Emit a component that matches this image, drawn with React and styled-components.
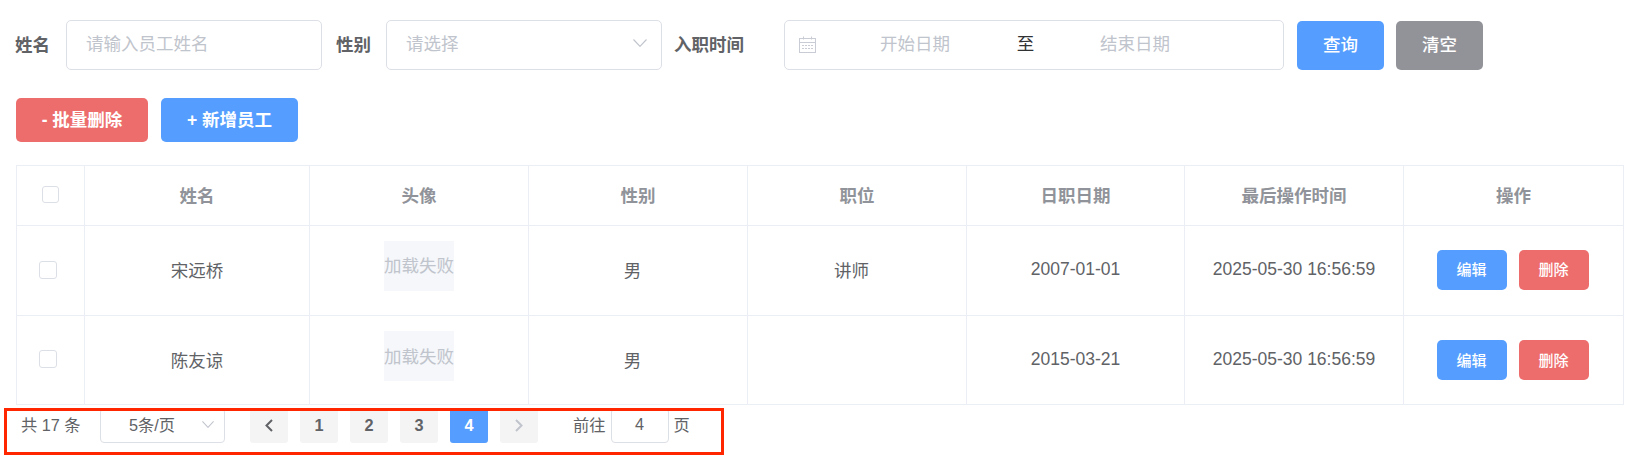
import React from "react";
import styled, { createGlobalStyle } from "styled-components";

const Global = createGlobalStyle`
  * { box-sizing: border-box; }
  html, body { margin: 0; padding: 0; background: #fff; }
  body { font-family: "Liberation Sans", "Noto Sans CJK SC", sans-serif; color: #606266; }
`;

const Page = styled.div`
  width: 1631px;
  height: 469px;
  padding: 20px 8px 0 16px;
  overflow: hidden;
`;

const SearchBar = styled.form`
  display: flex;
  align-items: center;
  height: 50px;
  margin-left: -1px;
`;

const Label = styled.label`
  width: ${(p) => p.$w}px;
  flex: none;
  padding-bottom: 4px;
  font-size: 17.5px;
  font-weight: 700;
  color: #606266;
  white-space: nowrap;
`;

const Field = styled.div`
  width: ${(p) => p.$w}px;
  height: 50px;
  flex: none;
  margin-right: ${(p) => p.$mr || 0}px;
  padding: 0 0 5px 19px;
  display: flex;
  align-items: center;
  justify-content: space-between;
  border: 1px solid #dcdfe6;
  border-radius: 5px;
  background: #fff;
  font-size: 17.5px;
  color: #c0c4cc;
`;

const SelectArrow = styled.svg`
  width: ${(p) => p.$w}px;
  height: ${(p) => p.$h}px;
  margin-right: ${(p) => p.$mr}px;
  flex: none;
  fill: none;
  stroke: #c0c4cc;
  stroke-width: 1.2;
`;

const DateBox = styled.div`
  width: 500px;
  height: 50px;
  flex: none;
  padding-left: 14px;
  margin-right: 13px;
  display: flex;
  align-items: center;
  border: 1px solid #dcdfe6;
  border-radius: 5px;
  font-size: 17.5px;
  color: #c0c4cc;
`;

const CalIcon = styled.svg`
  width: 17px;
  height: 17px;
  flex: none;
  margin-bottom: 1px;
`;

const DatePart = styled.span`
  width: ${(p) => p.$w}px;
  flex: none;
  text-align: center;
  padding-bottom: 5px;
`;

const DateSep = styled.span`
  width: 23px;
  flex: none;
  text-align: center;
  color: #303133;
  padding-bottom: 5px;
`;

const Button = styled.button`
  height: ${(p) => p.$h}px;
  width: ${(p) => p.$w}px;
  flex: none;
  margin-right: ${(p) => p.$mr || 0}px;
  padding: 0 0 ${(p) => p.$pb || 0}px;
  border: none;
  border-radius: 5px;
  background: ${(p) => p.$bg};
  color: #fff;
  font-family: inherit;
  font-size: ${(p) => p.$fs || 17.5}px;
  font-weight: ${(p) => p.$fw || 400};
  white-space: nowrap;
`;

const QueryWrap = styled.div`
  display: flex;
  align-self: flex-end;
`;

const ActionBar = styled.div`
  display: flex;
  margin-top: 28px;
  margin-bottom: 23px;
`;

const Table = styled.table`
  width: 1607px;
  table-layout: fixed;
  border-collapse: collapse;
  font-size: 17.5px;
`;

const HeadCell = styled.th`
  height: 60px;
  padding: 0 0 2px;
  border: 1px solid #ebeef5;
  color: #909399;
  font-weight: 700;
  text-align: center;
`;

const Cell = styled.td`
  height: ${(p) => p.$h}px;
  padding: 0 ${(p) => p.$pr || 0}px 2px 0;
  border: 1px solid #ebeef5;
  color: #606266;
  text-align: center;
`;

const Check = styled.span`
  display: block;
  width: ${(p) => p.$s}px;
  height: ${(p) => p.$s}px;
  margin: 0 auto;
  transform: translateX(${(p) => p.$dx}px);
  border: 1px solid #dcdfe6;
  border-radius: 3px;
  background: #fff;
`;

const Avatar = styled.div`
  width: 70px;
  height: 50px;
  margin: 0 auto ${(p) => p.$mb}px;
  padding-bottom: 2px;
  display: flex;
  align-items: center;
  justify-content: center;
  background: #f5f7fa;
  color: #c0c4cc;
  white-space: nowrap;
`;

const Ops = styled.div`
  display: flex;
  justify-content: center;
  gap: 12px;
  margin-top: ${(p) => p.$mt}px;
  padding-right: 2px;
`;

const Pagination = styled.div`
  position: relative;
  display: flex;
  align-items: center;
  height: 35px;
  margin-top: 3px;
  font-size: 16.25px;
  color: #606266;
`;

const Total = styled.span`
  width: 84px;
  flex: none;
  padding: 0 0 3px 5px;
  white-space: nowrap;
`;

const SizeSelect = styled.div`
  width: 125px;
  height: 35px;
  flex: none;
  margin-right: 25px;
  padding: 0 0 3px 28px;
  display: flex;
  align-items: center;
  justify-content: space-between;
  border: 1px solid #dcdfe6;
  border-radius: 4px;
`;

const Pager = styled.div`
  width: 38px;
  height: 35px;
  flex: none;
  margin-right: ${(p) => p.$mr ?? 12}px;
  display: flex;
  align-items: center;
  justify-content: center;
  border-radius: 3px;
  background: ${(p) => (p.$active ? "#559eff" : "#f4f4f5")};
  color: ${(p) => (p.$active ? "#fff" : "#606266")};
  font-weight: 700;
`;

const PagerChevron = styled.svg`
  width: 8px;
  height: 13px;
  fill: none;
  stroke: ${(p) => p.$c};
  stroke-width: 2;
`;

const JumpText = styled.span`
  flex: none;
  padding-bottom: 3px;
  white-space: nowrap;
`;

const JumpInput = styled.div`
  width: 58px;
  height: 35px;
  flex: none;
  margin: 0 5px;
  padding-bottom: 2px;
  display: flex;
  align-items: center;
  justify-content: center;
  border: 1px solid #dcdfe6;
  border-radius: 4px;
`;

const Highlight = styled.div`
  position: absolute;
  top: 0;
  left: -12px;
  width: 720px;
  height: 47px;
  border: 3px solid #ff2600;
  pointer-events: none;
`;

const widths = [68, 225, 219, 219, 219, 218, 219, 220];
const headers = ["姓名", "头像", "性别", "职位", "日职日期", "最后操作时间", "操作"];
const rows = [
  { name: "宋远桥", gender: "男", job: "讲师", date: "2007-01-01", updated: "2025-05-30 16:56:59", h: 90, mb: 8, opsMt: 0 },
  { name: "陈友谅", gender: "男", job: "", date: "2015-03-21", updated: "2025-05-30 16:56:59", h: 89, mb: 6, opsMt: 2 },
];

const Chevron = ({ w, h, mr }) => (
  <SelectArrow $w={w} $h={h} $mr={mr} viewBox="0 0 14 8" preserveAspectRatio="none">
    <path d="M0.5 0.5 L7 7.3 L13.5 0.5" />
  </SelectArrow>
);

const Calendar = () => (
  <CalIcon viewBox="0 0 17 17" fill="none" stroke="#c9ccd4" strokeWidth="1">
    <rect x="0.5" y="2.5" width="16" height="14" />
    <path d="M0.5 6.5 H16.5 M4.5 0.5 V3.5 M12.5 0.5 V3.5" />
    <path d="M3 9.5 H14 M3 12.5 H14" strokeDasharray="2 1" />
  </CalIcon>
);

export default function App() {
  return (
    <Page>
      <Global />
      <SearchBar>
        <Label $w={51}>姓名</Label>
        <Field $w={256} $mr={14}>请输入员工姓名</Field>
        <Label $w={50}>性别</Label>
        <Field $w={276} $mr={12}>
          请选择
          <Chevron w={14} h={8} mr={14} />
        </Field>
        <Label $w={110}>入职时间</Label>
        <DateBox>
          <Calendar />
          <DatePart $w={198}>开始日期</DatePart>
          <DateSep>至</DateSep>
          <DatePart $w={196}>结束日期</DatePart>
        </DateBox>
        <QueryWrap>
          <Button type="button" $w={87} $h={49} $mr={12} $pb={4} $bg="#559eff" $fw={500}>查询</Button>
          <Button type="button" $w={87} $h={49} $pb={4} $bg="#929399" $fw={500}>清空</Button>
        </QueryWrap>
      </SearchBar>

      <ActionBar>
        <Button type="button" $w={132} $h={44} $mr={13} $pb={3} $bg="#ed6d6d" $fw={700}>- 批量删除</Button>
        <Button type="button" $w={137} $h={44} $pb={3} $bg="#559eff" $fw={700}>+ 新增员工</Button>
      </ActionBar>

      <Table>
        <colgroup>
          {widths.map((w, i) => (
            <col key={i} style={{ width: w }} />
          ))}
        </colgroup>
        <thead>
          <tr>
            <HeadCell><Check $s={17} $dx={0} /></HeadCell>
            {headers.map((h) => (
              <HeadCell key={h}>{h}</HeadCell>
            ))}
          </tr>
        </thead>
        <tbody>
          {rows.map((r) => (
            <tr key={r.name}>
              <Cell $h={r.h}><Check $s={18} $dx={-3} /></Cell>
              <Cell $h={r.h}>{r.name}</Cell>
              <Cell $h={r.h}><Avatar $mb={r.mb}>加载失败</Avatar></Cell>
              <Cell $h={r.h} $pr={11}>{r.gender}</Cell>
              <Cell $h={r.h} $pr={11}>{r.job}</Cell>
              <Cell $h={r.h}>{r.date}</Cell>
              <Cell $h={r.h}>{r.updated}</Cell>
              <Cell $h={r.h}>
                <Ops $mt={r.opsMt}>
                  <Button type="button" $w={70} $h={40} $fs={15} $pb={2} $bg="#559eff" $fw={500}>编辑</Button>
                  <Button type="button" $w={70} $h={40} $fs={15} $pb={2} $bg="#ed6d6d" $fw={500}>删除</Button>
                </Ops>
              </Cell>
            </tr>
          ))}
        </tbody>
      </Table>

      <Pagination>
        <Total>共 17 条</Total>
        <SizeSelect>
          5条/页
          <Chevron w={12} h={7} mr={10} />
        </SizeSelect>
        <Pager>
          <PagerChevron $c="#606266" viewBox="0 0 8 13"><path d="M7 1 L1.5 6.5 L7 12" /></PagerChevron>
        </Pager>
        <Pager>1</Pager>
        <Pager>2</Pager>
        <Pager>3</Pager>
        <Pager $active>4</Pager>
        <Pager $mr={35}>
          <PagerChevron $c="#c0c4cc" viewBox="0 0 8 13"><path d="M1 1 L6.5 6.5 L1 12" /></PagerChevron>
        </Pager>
        <JumpText>前往</JumpText>
        <JumpInput>4</JumpInput>
        <JumpText>页</JumpText>
        <Highlight />
      </Pagination>
    </Page>
  );
}
